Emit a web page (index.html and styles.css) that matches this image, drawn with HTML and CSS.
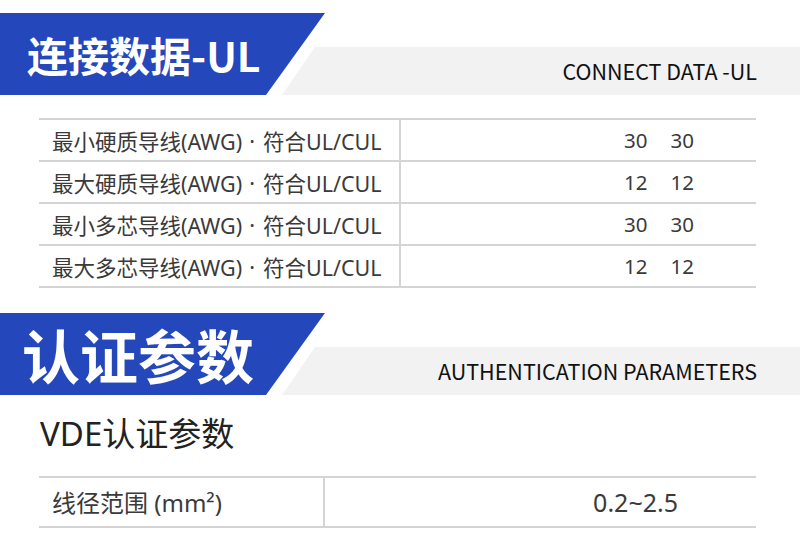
FILE: index.html
```html
<!DOCTYPE html>
<html lang="zh-CN">
<head>
<meta charset="utf-8">
<link rel="stylesheet" href="styles.css">
</head>
<body>
<div class="page">
  <div class="banner banner-first">
    <div class="banner-blue"><h1 class="title">连接数据-UL</h1></div>
    <div class="banner-gray"><span class="subtitle">CONNECT DATA -UL</span></div>
  </div>

  <div class="spec spec-ul">
    <div class="row">
      <div class="cell label">最小硬质导线(AWG)<span class="dot">·</span>符合UL/CUL</div>
      <div class="cell value"><span>30</span><span>30</span></div>
    </div>
    <div class="row">
      <div class="cell label">最大硬质导线(AWG)<span class="dot">·</span>符合UL/CUL</div>
      <div class="cell value"><span>12</span><span>12</span></div>
    </div>
    <div class="row">
      <div class="cell label">最小多芯导线(AWG)<span class="dot">·</span>符合UL/CUL</div>
      <div class="cell value"><span>30</span><span>30</span></div>
    </div>
    <div class="row">
      <div class="cell label">最大多芯导线(AWG)<span class="dot">·</span>符合UL/CUL</div>
      <div class="cell value"><span>12</span><span>12</span></div>
    </div>
  </div>

  <div class="banner banner-second">
    <div class="banner-blue"><h1 class="title title-big">认证参数</h1></div>
    <div class="banner-gray"><span class="subtitle">AUTHENTICATION PARAMETERS</span></div>
  </div>

  <h2 class="section-title">VDE认证参数</h2>

  <div class="spec spec-vde">
    <div class="row">
      <div class="cell label">线径范围 (mm²)</div>
      <div class="cell value">0.2~2.5</div>
    </div>
  </div>
</div>
</body>
</html>
```

FILE: styles.css
```css
* { box-sizing: border-box; margin: 0; padding: 0; }

html, body {
  width: 800px;
  height: 537px;
  overflow: hidden;
  background: #ffffff;
}

body {
  font-family: "Noto Sans CJK SC", "Noto Sans", sans-serif;
  color: #333333;
}

.page {
  display: flex;
  flex-direction: column;
  padding-top: 13px;
}

.banner {
  display: flex;
  align-items: flex-end;
  height: 82px;
}

.banner-blue {
  width: 325px;
  height: 82px;
  flex: none;
  background: #2447bb;
  clip-path: polygon(0 0, 100% 0, 266px 100%, 0 100%);
  display: flex;
  align-items: center;
}

.banner-gray {
  flex: 1;
  height: 48px;
  margin-left: -43px;
  background: #f2f2f2;
  clip-path: polygon(33px 0, 100% 0, 100% 100%, 0 100%);
  display: flex;
  align-items: center;
  justify-content: flex-end;
  padding-right: 43px;
}

.title {
  color: #ffffff;
  font-weight: 700;
  font-size: 41px;
  line-height: 1;
  padding-left: 27px;
}

.title-big {
  font-size: 58px;
  padding-left: 22px;
}

.subtitle {
  font-size: 21.5px;
  color: #111111;
  line-height: 1;
}

.spec {
  margin-left: 39px;
  width: 717px;
  border-top: 2px solid #d4d4d4;
}

.spec-ul { margin-top: 23px; }

.row {
  display: grid;
  grid-template-columns: 362px 1fr;
  border-bottom: 2px solid #d4d4d4;
}

.spec-ul .row { height: 42px; }

.cell {
  display: flex;
  align-items: center;
  font-family: "Noto Sans", "Noto Sans CJK SC", sans-serif;
  font-size: 20.5px;
  color: #3a3a3a;
  white-space: nowrap;
}

.spec-ul .label { font-size: 21.5px; }

.dot {
  padding: 0 8px 0 7px;
}

.label {
  padding-left: 13px;
  border-right: 2px solid #d4d4d4;
}

.value {
  justify-content: flex-end;
  gap: 23px;
  padding-right: 62px;
}

.banner-second { margin-top: 25px; }

.section-title {
  font-family: "Noto Sans", "Noto Sans CJK SC", sans-serif;
  font-weight: 400;
  font-size: 33px;
  color: #222222;
  margin-left: 40px;
  margin-top: 19px;
  line-height: 1.2;
}

.spec-vde { margin-top: 22px; }

.spec-vde .row {
  height: 50px;
  grid-template-columns: 286px 1fr;
}

.spec-vde .cell { font-size: 24px; }

.spec-vde .value {
  font-size: 25px;
  padding-right: 78px;
}
```
